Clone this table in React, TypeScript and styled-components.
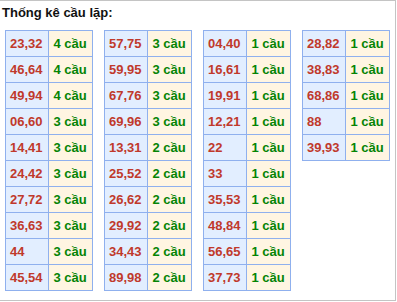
import styled, { createGlobalStyle } from 'styled-components'

const GlobalStyle = createGlobalStyle`
  body {
    margin: 0;
    background: #fff;
    font-family: "Liberation Sans", Arial, sans-serif;
  }
`

const columns: [string, number][][] = [
  [
    ['23,32', 4], ['46,64', 4], ['49,94', 4], ['06,60', 3], ['14,41', 3],
    ['24,42', 3], ['27,72', 3], ['36,63', 3], ['44', 3], ['45,54', 3],
  ],
  [
    ['57,75', 3], ['59,95', 3], ['67,76', 3], ['69,96', 3], ['13,31', 2],
    ['25,52', 2], ['26,62', 2], ['29,92', 2], ['34,43', 2], ['89,98', 2],
  ],
  [
    ['04,40', 1], ['16,61', 1], ['19,91', 1], ['12,21', 1], ['22', 1],
    ['33', 1], ['35,53', 1], ['48,84', 1], ['56,65', 1], ['37,73', 1],
  ],
  [['28,82', 1], ['38,83', 1], ['68,86', 1], ['88', 1], ['39,93', 1]],
]

const Box = styled.div`
  box-sizing: border-box;
  width: 397px;
  height: 301px;
  margin-left: -1px;
  border: 1px solid #c4c4c4;
  padding: 3px 0 0 2px;
`

const Title = styled.h3`
  margin: 0 0 9px;
  font-size: 13px;
  line-height: 17px;
  font-weight: bold;
  color: #111;
`

const Tables = styled.div`
  display: flex;
  align-items: flex-start;
  gap: 11px;
  padding-left: 3px;
`

const Table = styled.table`
  border-collapse: collapse;
  width: 88px;
`

const Cell = styled.td<{ $count?: boolean }>`
  height: 25px;
  width: 39px;
  padding: 0 0 0 4px;
  border: 1px solid #8fb0ee;
  font-size: 13px;
  font-weight: bold;
  white-space: nowrap;
  background: ${({ $count }) => ($count ? '#fff5e2' : '#e2eeff')};
  color: ${({ $count }) => ($count ? '#058405' : '#c0392b')};
`

export default function App() {
  return (
    <Box>
      <GlobalStyle />
      <Title>Thống kê cầu lặp:</Title>
      <Tables>
        {columns.map((rows, i) => (
          <Table key={i}>
            <tbody>
              {rows.map(([pair, count]) => (
                <tr key={pair}>
                  <Cell>{pair}</Cell>
                  <Cell $count>{count} cầu</Cell>
                </tr>
              ))}
            </tbody>
          </Table>
        ))}
      </Tables>
    </Box>
  )
}
